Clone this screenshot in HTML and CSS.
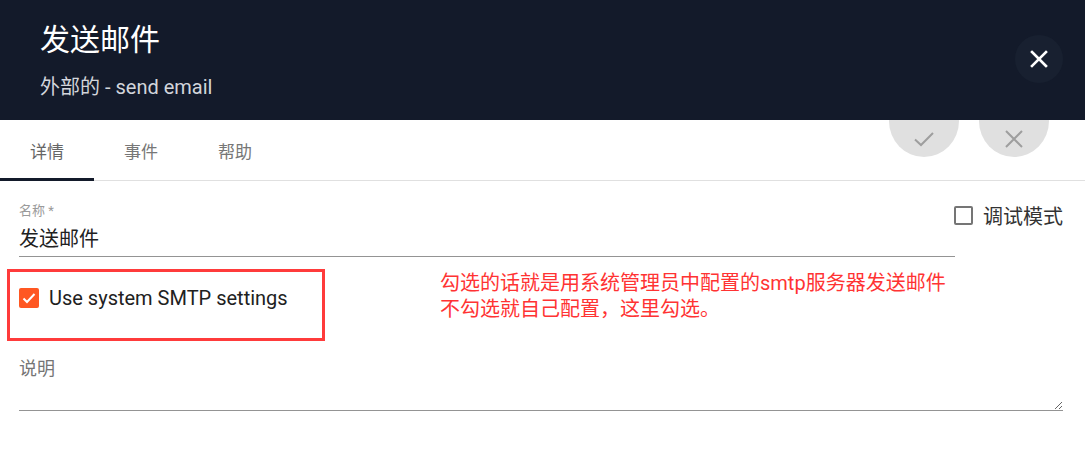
FILE: index.html
```html
<!DOCTYPE html>
<html lang="zh-CN">
<head>
    <meta charset="UTF-8">
    <meta name="viewport" content="width=device-width, initial-scale=1.0">
    <title>发送邮件</title>
    <link rel="stylesheet" href="styles.css">
</head>
<body>
    <div class="dialog">
        <!-- Header -->
        <div class="header">
            <div class="title">发送邮件</div>
            <div class="subtitle">外部的 - send email</div>
            <button class="close-btn" aria-label="close">
                <svg width="18" height="18" viewBox="0 0 18 18"><path d="M2 2L16 16M16 2L2 16" stroke="#fff" stroke-width="2.6" stroke-linecap="square"/></svg>
            </button>
        </div>

        <!-- Floating action buttons -->
        <button class="fab fab-ok" aria-label="ok">
            <svg width="24" height="24" viewBox="0 0 24 24"><path d="M3 12.5L9 18L21 6" fill="none" stroke="#9e9e9e" stroke-width="2"/></svg>
        </button>
        <button class="fab fab-cancel" aria-label="cancel">
            <svg width="20" height="20" viewBox="0 0 20 20"><path d="M2 2L18 18M18 2L2 18" stroke="#9e9e9e" stroke-width="2"/></svg>
        </button>

        <!-- Tabs -->
        <div class="tabs">
            <div class="tab active">详情</div>
            <div class="tab">事件</div>
            <div class="tab">帮助</div>
        </div>

        <div class="form">
            <div class="row">
                <div class="field">
                    <div class="field-label">名称 *</div>
                    <div class="field-value">发送邮件</div>
                </div>
                <label class="debug">
                    <span class="box"></span>
                    <span>调试模式</span>
                </label>
            </div>

            <div class="row smtp-row">
                <div class="mark">
                    <span class="box checked">
                        <svg width="16" height="16" viewBox="0 0 16 16"><path d="M2.5 8.5L6 12L13.5 4" fill="none" stroke="#fff" stroke-width="2"/></svg>
                    </span>
                    <span class="smtp-text">Use system SMTP settings</span>
                </div>
                <div class="note">勾选的话就是用系统管理员中配置的smtp服务器发送邮件<br>不勾选就自己配置，这里勾选。</div>
            </div>

            <textarea class="desc" placeholder="说明"></textarea>
        </div>
    </div>
</body>
</html>
```

FILE: styles.css
```css
body {
    margin: 0;
    font-family: Roboto, "Noto Sans CJK SC", sans-serif;
    background: #fff;
}
.dialog {
    position: relative;
    width: 1085px;
    height: 450px;
    overflow: hidden;
}
.header {
    position: relative;
    z-index: 2;
    height: 120px;
    box-sizing: border-box;
    padding: 22px 40px 0;
    background-color: #131a2a;
}
.title {
    color: #fff;
    font-size: 30px;
    line-height: 36px;
}
.subtitle {
    margin-top: 17px;
    color: #d2d5db;
    font-size: 20px;
    line-height: 24px;
}
button {
    border: none;
    padding: 0;
    cursor: pointer;
    display: flex;
    align-items: center;
    justify-content: center;
}
.close-btn {
    position: absolute;
    top: 35px;
    right: 22px;
    width: 48px;
    height: 48px;
    border-radius: 50%;
    background-color: #182030;
}
.fab {
    position: absolute;
    z-index: 1;
    top: 85px;
    width: 70px;
    height: 70px;
    border-radius: 50%;
    background-color: #e0e0e0;
    padding-top: 72px;
}
.fab svg {
    margin-top: -36px;
}
.fab-ok {
    left: 889px;
}
.fab-cancel {
    left: 979px;
}
.tabs {
    display: flex;
    height: 60px;
    border-bottom: 1px solid #e0e0e0;
}
.tab {
    position: relative;
    width: 94px;
    display: flex;
    align-items: center;
    justify-content: center;
    color: #777;
    font-size: 17px;
}
.tab.active {
    color: #666;
}
.tab.active::after {
    content: "";
    position: absolute;
    left: 0;
    right: 0;
    bottom: -1px;
    height: 3px;
    background-color: #131a2a;
}
.form {
    padding: 0 22px 0 19px;
}
.row {
    display: flex;
}
.field {
    width: 936px;
    padding-top: 22px;
    border-bottom: 1px solid #949494;
}
.field-label {
    color: #9a9a9a;
    font-size: 13px;
    line-height: 16px;
}
.field-value {
    margin-top: 8px;
    padding-bottom: 5px;
    color: #212121;
    font-size: 20px;
    line-height: 24px;
}
.debug {
    display: flex;
    align-items: center;
    gap: 10px;
    margin-left: -1px;
    height: 20px;
    margin-top: 24px;
    color: #333;
    font-size: 20px;
}
.box {
    width: 15px;
    height: 15px;
    border: 2px solid #757575;
    border-radius: 2px;
    flex: none;
}
.smtp-row {
    margin-top: 12px;
}
.mark {
    display: flex;
    align-items: flex-start;
    gap: 10px;
    width: 303px;
    height: 50px;
    margin-left: -12px;
    padding: 16px 0 0 9px;
    border: 3px solid #ff3b3b;
}
.box.checked {
    width: 20px;
    height: 20px;
    border: none;
    background-color: #ff5722;
    display: flex;
    align-items: center;
    justify-content: center;
}
.smtp-text {
    color: #212121;
    font-size: 20px;
    line-height: 20px;
}
.note {
    margin-left: 115px;
    margin-top: 1px;
    color: #ff3333;
    font-size: 20px;
    line-height: 26px;
}
.desc {
    display: block;
    width: 1044px;
    height: 59px;
    box-sizing: border-box;
    margin-top: 11px;
    padding: 6px 0 0;
    border: none;
    border-bottom: 1px solid #949494;
    outline: none;
    font-family: Roboto, "Noto Sans CJK SC", sans-serif;
    font-size: 18px;
    line-height: 22px;
}
.desc::placeholder {
    color: #757575;
}
```
